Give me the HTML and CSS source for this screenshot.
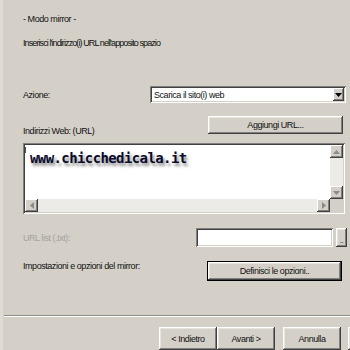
FILE: index.html
```html
<!DOCTYPE html>
<html lang="it">
<head>
  <meta charset="UTF-8" />
  <title>Modo mirror</title>
  <link rel="stylesheet" href="styles.css">
</head>
<body>
  <div class="dialog">
    <p class="caption">- Modo mirror -</p>
    <p class="intro">Inserisci l'indirizzo(i) URL nell'apposito spazio</p>

    <div class="row row-action">
      <span class="label">Azione:</span>
      <div class="combo">
        <span class="combo-value">Scarica il sito(i) web</span>
        <span class="combo-btn">
          <svg width="7" height="4" viewBox="0 0 7 4"><path d="M0 0h7L3.5 4z" fill="#000"/></svg>
        </span>
      </div>
    </div>

    <div class="row row-urls">
      <span class="label">Indirizzi Web: (URL)</span>
      <button class="btn btn-add">Aggiungi URL...</button>
    </div>

    <div class="url-box">
      <div class="url-main">
        <div class="url-text"><span class="caret"></span>www.chicchedicala.it</div>
        <div class="vscroll">
          <span class="arrow-btn">
            <svg width="7" height="4" viewBox="0 0 7 4"><path d="M3.5 0L7 4H0z" fill="#8c8a86"/></svg>
          </span>
          <span class="arrow-btn">
            <svg width="7" height="4" viewBox="0 0 7 4"><path d="M0 0h7L3.5 4z" fill="#8c8a86"/></svg>
          </span>
        </div>
      </div>
      <div class="hscroll-row">
        <div class="hscroll">
          <span class="arrow-btn">
            <svg width="4" height="7" viewBox="0 0 4 7"><path d="M4 0v7L0 3.5z" fill="#8c8a86"/></svg>
          </span>
          <span class="arrow-btn">
            <svg width="4" height="7" viewBox="0 0 4 7"><path d="M0 0v7L4 3.5z" fill="#8c8a86"/></svg>
          </span>
        </div>
        <div class="corner"></div>
      </div>
    </div>

    <div class="row row-list">
      <span class="label disabled">URL list (.txt):</span>
      <div class="list-controls">
        <div class="field list-input"></div>
        <button class="btn btn-dots">..</button>
      </div>
    </div>

    <div class="row row-options">
      <span class="label">Impostazioni e opzioni del mirror:</span>
      <button class="btn btn-default">Definisci le opzioni..</button>
    </div>

    <div class="separator"></div>

    <div class="footer">
      <button class="btn btn-nav">&lt; Indietro</button>
      <button class="btn btn-nav">Avanti &gt;</button>
      <button class="btn btn-nav btn-cancel">Annulla</button>
      <button class="btn btn-nav btn-help"></button>
    </div>
  </div>
</body>
</html>
```

FILE: styles.css
```css
* {
  box-sizing: border-box;
}

body {
  margin: 0;
  background: #d4d0c8;
  font-family: "Liberation Sans", Arial, sans-serif;
  font-size: 9px;
  letter-spacing: -0.45px;
  color: #111;
  overflow: hidden;
}

.dialog {
  width: 350px;
  height: 350px;
  padding: 0 5px 0 20px;
  border-left: 3px solid #dfdcd5;
  overflow: hidden;
}

p {
  margin: 0;
  line-height: 12px;
}

.caption {
  padding-top: 13px;
}

.intro {
  margin-top: 12px;
  letter-spacing: -0.9px;
}

.row {
  display: flex;
  justify-content: space-between;
  align-items: center;
}

.label {
  line-height: 12px;
}

.disabled {
  color: #a5a29c;
}

/* classic 3d button */
.btn {
  font: inherit;
  letter-spacing: inherit;
  color: #111;
  background: #d4d0c8;
  border: 0;
  padding: 0;
  box-shadow: inset -1px -1px #404040, inset 1px 1px #fff,
              inset -2px -2px #808080, inset 2px 2px #e6e4df;
}

.field {
  background: #fff;
  box-shadow: inset 1px 1px #808080, inset -1px -1px #fff,
              inset 2px 2px #404040, inset -2px -2px #d4d0c8;
}

/* azione */
.row-action {
  margin-top: 37px;
  height: 17px;
}

.combo {
  width: 196px;
  height: 17px;
  margin-right: -1px;
  padding: 2px;
  display: flex;
  align-items: center;
  background: #fff;
  box-shadow: inset 1px 1px #808080, inset -1px -1px #fff,
              inset 2px 2px #404040, inset -2px -2px #d4d0c8;
}

.combo-value {
  flex: 1;
  padding-left: 2px;
  line-height: 12px;
}

.combo-btn {
  width: 11px;
  height: 13px;
  display: flex;
  align-items: center;
  justify-content: center;
  background: #d4d0c8;
  box-shadow: inset -1px -1px #404040, inset 1px 1px #fff,
              inset -2px -2px #808080;
}

/* indirizzi */
.row-urls {
  margin-top: 13px;
  height: 18px;
  align-items: flex-start;
}

.row-urls .label {
  margin-top: 9px;
}

.btn-add {
  width: 135px;
  height: 18px;
  margin-right: 2px;
}

.url-box {
  margin-top: 9px;
  height: 71px;
  padding: 2px;
  background: #fff;
  display: flex;
  flex-direction: column;
  box-shadow: inset 1px 1px #808080, inset -1px -1px #fff,
              inset 2px 2px #404040, inset -2px -2px #d4d0c8;
}

.url-main {
  flex: 1;
  display: flex;
}

.url-text {
  flex: 1;
  padding: 5px 0 0 5px;
  font-family: "DejaVu Sans Mono", monospace;
  font-weight: bold;
  font-size: 14px;
  letter-spacing: -0.6px;
  line-height: 16px;
  color: #0b0b2c;
  text-shadow: 2px 3px 3px rgba(40, 40, 40, 0.55);
  position: relative;
}

.caret {
  position: absolute;
  left: 0;
  top: 2px;
  width: 1px;
  height: 6px;
  background: #555;
}

.vscroll {
  width: 13px;
  display: flex;
  flex-direction: column;
  justify-content: space-between;
  background: #ecebe7;
}

.hscroll-row {
  height: 13px;
  display: flex;
}

.hscroll {
  flex: 1;
  display: flex;
  justify-content: space-between;
  background: #ecebe7;
}

.corner {
  width: 13px;
  background: #d4d0c8;
}

.arrow-btn {
  width: 13px;
  height: 13px;
  display: flex;
  align-items: center;
  justify-content: center;
  background: #d4d0c8;
  box-shadow: inset -1px -1px #404040, inset 1px 1px #fff,
              inset -2px -2px #808080;
}

/* url list */
.row-list {
  margin-top: 14px;
  height: 19px;
}

.list-controls {
  display: flex;
  gap: 3px;
  margin-right: -2px;
}

.list-input {
  width: 137px;
  height: 19px;
}

.btn-dots {
  width: 11px;
  height: 19px;
  font-size: 8px;
  padding-top: 5px;
}

/* opzioni */
.row-options {
  margin-top: 14px;
  height: 20px;
  align-items: flex-start;
}

.row-options .label {
  margin-top: -1px;
}

.btn-default {
  width: 135px;
  height: 20px;
  margin-right: 3px;
  border: 1px solid #000;
}

.separator {
  margin: 34px -5px 0 -19px;
  height: 2px;
  border-top: 1px solid #8d8b86;
  border-bottom: 1px solid #fff;
}

.footer {
  margin-top: 10px;
  margin-left: 136px;
  display: flex;
}

.btn-nav {
  flex: none;
  width: 58px;
  height: 23px;
}

.btn-cancel {
  margin-left: 8px;
}

.btn-help {
  margin-left: 7px;
}
```
